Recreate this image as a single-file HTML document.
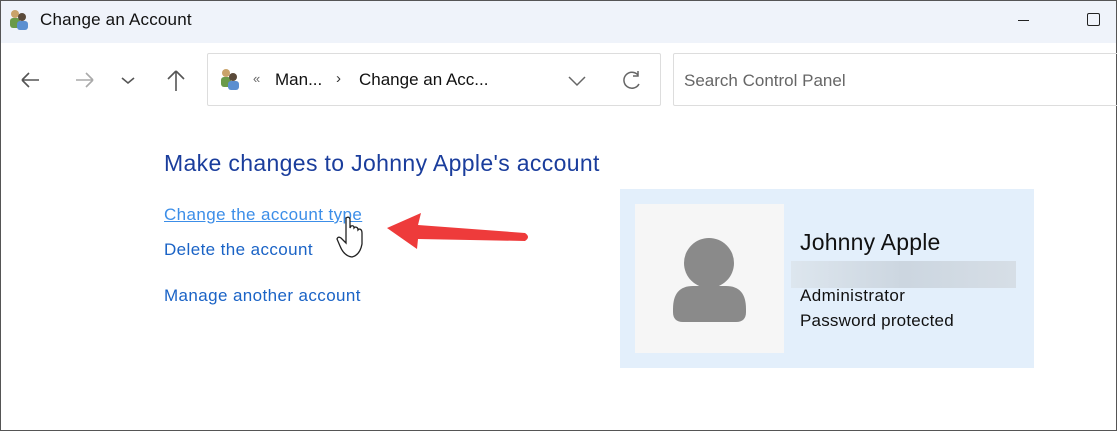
<!DOCTYPE html><html><head><style>
body{margin:0;width:1117px;height:431px;overflow:hidden;background:#fff;font-family:"Liberation Sans",sans-serif;position:relative}
.a{position:absolute;white-space:nowrap}
</style></head><body>
<div class="a" style="left:0;top:0;width:1117px;height:431px;box-sizing:border-box;border:1px solid #555"></div>
<div class="a" style="left:1px;top:1px;width:1115px;height:42px;background:#eff3fa"></div>
<svg class="a" style="left:8px;top:8px" width="22" height="22"><circle cx="7" cy="6" r="4" fill="#c9a36a"/><rect x="2" y="10" width="10" height="10" rx="3" fill="#6a9a4a"/><circle cx="14" cy="9" r="4" fill="#5a4a3a"/><rect x="9" y="13" width="11" height="9" rx="3" fill="#5b8fd0"/></svg>
<div class="a" style="left:40px;top:10px;font-size:17px;color:#111;letter-spacing:0.2px">Change an Account</div>
<div class="a" style="left:1018px;top:20px;width:11px;height:1px;background:#222"></div>
<div class="a" style="left:1087px;top:13px;width:11px;height:11px;border:1.5px solid #222;border-radius:2px"></div>
<svg class="a" style="left:18px;top:66px" width="180" height="30" fill="none" stroke-width="1.6"><path d="M4 14H21M4 14L11 7M4 14L11 21" stroke="#555"/><path d="M58 14H75M75 14L68 7M75 14L68 21" stroke="#aaa"/><path d="M104 12L110 17L116 12" stroke="#555"/><path d="M158 25V5M158 5L150 13M158 5L166 13" stroke="#555"/></svg>
<div class="a" style="left:207px;top:53px;width:452px;height:51px;border:1px solid #ddd;border-radius:2px"></div>
<svg class="a" style="left:219px;top:67px" width="24" height="24"><circle cx="7" cy="6" r="4" fill="#c9a36a"/><rect x="2" y="10" width="10" height="10" rx="3" fill="#6a9a4a"/><circle cx="14" cy="10" r="4" fill="#5a4a3a"/><rect x="9" y="14" width="11" height="9" rx="3" fill="#5b8fd0"/></svg>
<div class="a" style="left:253px;top:71px;font-size:13px;color:#666">«</div>
<div class="a" style="left:275px;top:70px;font-size:17px;color:#111">Man...</div>
<div class="a" style="left:336px;top:70px;font-size:15px;color:#333">›</div>
<div class="a" style="left:359px;top:70px;font-size:17px;color:#111">Change an Acc...</div>
<svg class="a" style="left:565px;top:68px" width="80" height="26" fill="none" stroke="#666" stroke-width="1.5"><path d="M4 9L12 17L20 9"/><path d="M73 7A8 8 0 1 0 74 16M73 3V8H68"/></svg>
<div class="a" style="left:673px;top:53px;width:450px;height:51px;border:1px solid #ddd;border-radius:2px"></div>
<div class="a" style="left:684px;top:71px;font-size:17px;color:#666">Search Control Panel</div>
<div class="a" style="left:164px;top:150px;font-size:23px;color:#1a3d9c;letter-spacing:0.35px">Make changes to Johnny Apple's account</div>
<div class="a" style="left:164px;top:205px;font-size:17px;color:#3c8ee8;text-decoration:underline;letter-spacing:0.4px">Change the account type</div>
<div class="a" style="left:164px;top:240px;font-size:17px;color:#1a63c6;letter-spacing:0.4px">Delete the account</div>
<div class="a" style="left:164px;top:286px;font-size:17px;color:#1a63c6;letter-spacing:0.4px">Manage another account</div>
<svg class="a" style="left:325px;top:205px" width="220" height="55"><path d="M62 23L96 8L93 20L200 28Q206 32 200 36L93 34L92 44Z" fill="#ee3b3b"/><path d="M21 25L21 13Q24 11 25 14L25 23L26 21Q29 20 29 23L30 22Q33 22 33 25L34 24Q37 24 37 28L37 39Q35 50 27 52Q19 51 15 41L12 34Q13 31 16 33L21 38Z" fill="#fff" stroke="#222" stroke-width="1.3"/></svg>
<div class="a" style="left:620px;top:189px;width:414px;height:179px;background:#e3effb"></div>
<div class="a" style="left:635px;top:204px;width:149px;height:149px;background:#f6f6f6"></div>
<svg class="a" style="left:635px;top:204px" width="149" height="149"><circle cx="74" cy="59" r="25" fill="#8a8a8a"/><path d="M38 105Q38 82 58 82H91Q111 82 111 105V108Q111 118 101 118H48Q38 118 38 108Z" fill="#8a8a8a"/></svg>
<div class="a" style="left:800px;top:229px;font-size:23px;color:#111;letter-spacing:0.2px">Johnny Apple</div>
<div class="a" style="left:791px;top:261px;width:225px;height:27px;background:linear-gradient(90deg,#dde6ee,#ccd6e0,#d6dee6)"></div>
<div class="a" style="left:800px;top:286px;font-size:17px;color:#111;letter-spacing:0.4px">Administrator</div>
<div class="a" style="left:800px;top:311px;font-size:17px;color:#111;letter-spacing:0.2px">Password protected</div>
</body></html>
